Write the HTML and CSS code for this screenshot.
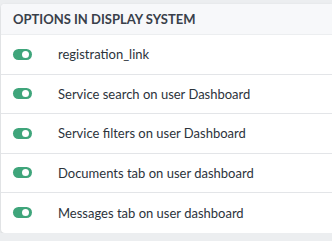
FILE: index.html
```html
<!DOCTYPE html>
<html lang="en">
<head>
    <meta charset="UTF-8">
    <title>Options in display system</title>
    <link rel="stylesheet" href="styles.css">
</head>
<body>
    <div class="card">
        <div class="card-header">Options in display system</div>
        <div class="option">
            <span class="toggle on"></span>
            <span class="label">registration_link</span>
        </div>
        <div class="option">
            <span class="toggle on"></span>
            <span class="label">Service search on user Dashboard</span>
        </div>
        <div class="option">
            <span class="toggle on"></span>
            <span class="label">Service filters on user Dashboard</span>
        </div>
        <div class="option">
            <span class="toggle on"></span>
            <span class="label">Documents tab on user dashboard</span>
        </div>
        <div class="option">
            <span class="toggle on"></span>
            <span class="label">Messages tab on user dashboard</span>
        </div>
    </div>
</body>
</html>
```

FILE: styles.css
```css
body { margin: 0; padding: 4px 0 0 1px; background: #eceef0; font-family: Lato, "Open Sans", sans-serif; color: #2c333b; }
.card {
    background: #fff;
    border-radius: 4px 0 0 4px;
    box-shadow: 0 1px 3px rgba(0,0,0,0.12);
    overflow: hidden;
}
.card-header {
    height: 31px;
    line-height: 31px;
    padding-left: 12px;
    background: #f7f8fa;
    text-transform: uppercase;
    font-weight: 700;
    font-size: 13px;
    color: #39404a;
    border-bottom: 1px solid #eceef0;
    box-sizing: border-box;
}
.option {
    display: flex;
    align-items: center;
    height: 39.5px;
    border-bottom: 1px solid #e3e5e8;
    box-sizing: border-box;
    padding-left: 12px;
}
.option:last-child { border-bottom: none; }
.toggle {
    position: relative;
    width: 19px;
    height: 11px;
    border-radius: 6px;
    background: #ccc;
    flex-shrink: 0;
}
.toggle.on { background: #3fa57b; }
.toggle::after {
    content: "";
    position: absolute;
    top: 2px;
    right: 3px;
    width: 7px;
    height: 7px;
    border-radius: 50%;
    background: #fff;
}
.label { margin-left: 26px; font-size: 13px; }
```
